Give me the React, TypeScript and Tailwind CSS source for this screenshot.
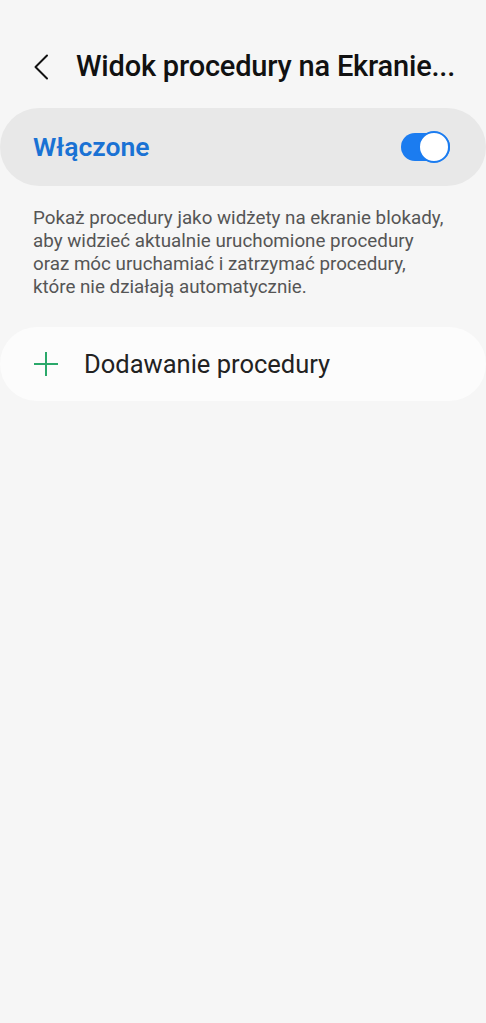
export default function App() {
  return (
    <div
      className="min-h-[1023px] w-full bg-[#f6f6f6] text-[#111]"
      style={{ fontFamily: "Roboto, 'Noto Sans', sans-serif" }}
    >
      {/* Header */}
      <div className="flex items-center h-[66px] pt-[34px] box-content">
        <div className="w-[76px] flex justify-start pl-[33px]">
          <svg width="17" height="26" viewBox="0 0 17 26" fill="none">
            <polyline
              points="14,1.5 2.5,13 14,24.5"
              stroke="#111"
              strokeWidth="2"
              strokeLinecap="round"
              strokeLinejoin="round"
            />
          </svg>
        </div>
        <h1 className="text-[29px] font-medium tracking-[-0.2px] truncate pr-[30px]">
          Widok procedury na Ekranie...
        </h1>
      </div>

      {/* Master switch */}
      <div className="mt-[8px] h-[78px] rounded-full bg-[#e8e8e8] flex items-center justify-between pl-[33px] pr-[36px]">
        <span className="text-[26.5px] font-semibold text-[#1a72d4]">Włączone</span>
        <div className="relative w-[49px] h-[28px] rounded-full bg-[#1b7cf0]">
          <div className="absolute right-0 top-[-2px] w-[32px] h-[32px] rounded-full bg-white border-[2px] border-[#1b7cf0]" />
        </div>
      </div>

      {/* Description */}
      <p className="pl-[33px] pt-[21px] text-[18.8px] leading-[23px] text-[#555] whitespace-nowrap">
        Pokaż procedury jako widżety na ekranie blokady,
        <br />
        aby widzieć aktualnie uruchomione procedury
        <br />
        oraz móc uruchamiać i zatrzymać procedury,
        <br />
        które nie działają automatycznie.
      </p>

      {/* Add routine */}
      <div className="mt-[28px] h-[74px] rounded-full bg-[#fcfcfc] flex items-center pl-[33px]">
        <svg width="26" height="26" viewBox="0 0 26 26" fill="none">
          <path d="M13 1v24M1 13h24" stroke="#2aa86a" strokeWidth="2" />
        </svg>
        <span className="ml-[25px] text-[25.5px] text-[#222]">Dodawanie procedury</span>
      </div>
    </div>
  );
}
